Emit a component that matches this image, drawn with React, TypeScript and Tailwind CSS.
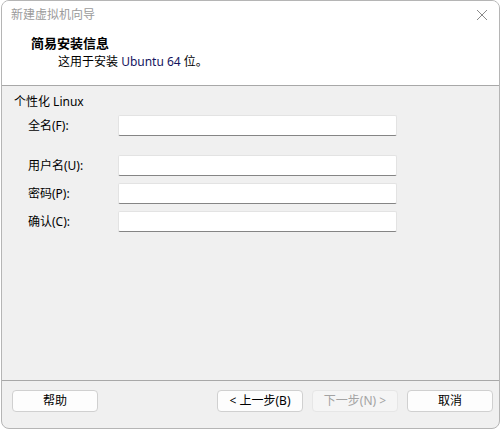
import React from "react";

const font = { fontFamily: '"Noto Sans","Noto Sans CJK SC",sans-serif' };

function Field({ label, className = "" }: { label: string; className?: string }) {
  return (
    <div className={"flex items-center pl-[26px] " + className}>
      <div className="w-[90px] text-[12px] leading-[16px] text-black">{label}</div>
      <div className="h-[21px] w-[279px] rounded-[2px] border border-[#e3e3e3] border-b-[#858585] bg-white" />
    </div>
  );
}

function Btn({ children, disabled = false, className = "" }: { children: React.ReactNode; disabled?: boolean; className?: string }) {
  return (
    <div
      className={
        "flex h-[22px] w-[86px] items-center justify-center rounded-[4px] border text-[12px] leading-[16px] " +
        (disabled
          ? "border-[#e6e6e6] bg-[#f5f5f5] text-[#a3a3a3] "
          : "border-[#d0d0d0] bg-[#fdfdfd] text-black ") +
        className
      }
    >
      {children}
    </div>
  );
}

export default function App() {
  return (
    <div className="h-[429px] w-[502px] bg-white" style={font}>
      <div className="ml-[1px] flex h-[429px] w-[499px] flex-col overflow-hidden rounded-[8px] border border-[#b5b5b5] bg-[#f0f0f0]">
        <div className="h-[84px] shrink-0 border-b border-[#a8a8a8] bg-white box-content">
          <div className="flex h-[27px] items-center justify-between pl-[9px] pr-[8px]">
            <span className="text-[12px] leading-[16px] text-[#9b9b9b]">新建虚拟机向导</span>
            <svg width="12" height="12" viewBox="0 0 12 12" className="mr-[3px]">
              <path d="M1 1 L11 11 M11 1 L1 11" stroke="#8a8a8a" strokeWidth="1" fill="none" />
            </svg>
          </div>
          <div className="pl-[29px] pt-[7px]">
            <div className="text-[13px] font-bold leading-[16px] text-black">简易安装信息</div>
            <div className="mt-[3px] pl-[27px] text-[12px] leading-[16px] text-black">
              这用于安装 <span className="text-[#141460]">Ubuntu 64</span> 位。
            </div>
          </div>
        </div>
        <div className="flex-1 pt-[8px]">
          <div className="pl-[12px] text-[12px] leading-[16px] text-black">个性化 Linux</div>
          <Field label="全名(F):" className="mt-[5px]" />
          <Field label="用户名(U):" className="mt-[19px]" />
          <Field label="密码(P):" className="mt-[7px]" />
          <Field label="确认(C):" className="mt-[7px]" />
        </div>
        <div className="flex h-[38px] shrink-0 border-t border-[#a8a8a8] pl-[10px] pr-[6px] pt-[9px] box-content">
          <Btn>帮助</Btn>
          <Btn className="ml-auto">&lt; 上一步(B)</Btn>
          <Btn disabled className="ml-[9px]">下一步(N) &gt;</Btn>
          <Btn className="ml-[9px]">取消</Btn>
        </div>
      </div>
    </div>
  );
}
